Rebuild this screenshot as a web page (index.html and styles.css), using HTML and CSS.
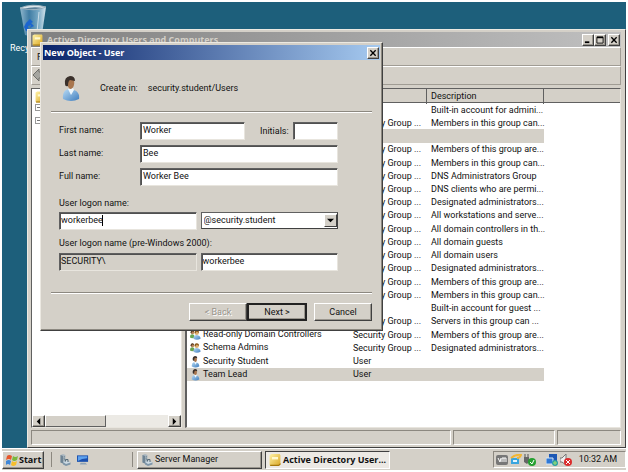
FILE: index.html
```html
<!DOCTYPE html>
<html lang="en">
<head>
  <meta charset="UTF-8" />
  <meta name="viewport" content="width=device-width, initial-scale=1.0"/>
  <title>Active Directory Users and Computers</title>
  <link rel="stylesheet" href="styles.css">
</head>
<body>
  <!-- shared icons -->
  <svg class="defs" width="0" height="0">
    <defs>
      <linearGradient id="shirt" x1="0" y1="0" x2="1" y2="1">
        <stop offset="0" stop-color="#b9dcf6"/><stop offset="1" stop-color="#3f7dbd"/>
      </linearGradient>
      <linearGradient id="gold" x1="0" y1="0" x2="1" y2="1">
        <stop offset="0" stop-color="#fff3a8"/><stop offset="1" stop-color="#d9a520"/>
      </linearGradient>
      <linearGradient id="glass" x1="0" y1="0" x2="1" y2="0">
        <stop offset="0" stop-color="#8fb6cc"/><stop offset=".35" stop-color="#3f7ca3"/><stop offset=".7" stop-color="#77a9c5"/><stop offset="1" stop-color="#d5e4ec"/>
      </linearGradient>
      <symbol id="user" viewBox="0 0 20 26">
        <path d="M2 23Q1 15 7 13L13 14Q19 16 18 23Q10 27 2 23Z" fill="url(#shirt)"/>
        <path d="M7 13L10 19L13 14L12 12Z" fill="#eef7fd"/>
        <path d="M6 5Q7 1 11 2Q14 4 13 9Q12 13 9 13Q6 11 6 5Z" fill="#a9764e"/>
        <path d="M4 8Q3 1 9 0Q14 0 14 5L9 4Q7 5 7 10Q4 11 4 8Z" fill="#3a302b"/>
      </symbol>
      <symbol id="group" viewBox="0 0 26 24">
        <path d="M0 18Q0 10 5 10Q11 10 11 18Q5 21 0 18Z" fill="#68a552"/>
        <circle cx="6" cy="6" r="4" fill="#b88458"/>
        <path d="M1 6Q2 0 7 1Q10 2 10 5L5 4L3 9Z" fill="#5a3c22"/>
        <path d="M8 21Q8 12 16 12Q25 13 25 21Q16 26 8 21Z" fill="url(#shirt)"/>
        <circle cx="16" cy="7" r="5" fill="#dfae70"/>
        <path d="M11 8Q10 1 16 1Q22 1 21 7L16 4L13 8Z" fill="#8a5a1d"/>
      </symbol>
      <symbol id="book" viewBox="0 0 20 20">
        <path d="M1 2L4 0H18L19 2V18L16 20H2L1 18Z" fill="url(#gold)"/>
        <path d="M5 5H15V9H5Z" fill="#fff9cf"/>
        <path d="M2 18H16L19 15V18L16 20H2Z" fill="#a5780c"/>
      </symbol>
      <symbol id="server" viewBox="0 0 24 24">
        <path d="M3 2L8 0L13 2V17L8 19L3 17Z" fill="#aab7c0"/>
        <path d="M3 2L8 4V19L3 17Z" fill="#6f8494"/>
        <path d="M9 6L12 5M9 9L12 8M9 12L12 11" stroke="#47606f" stroke-width="1"/>
        <path d="M8 16L16 13L23 17V21L14 24L8 21Z" fill="#7f96a8"/>
        <path d="M8 16L16 13L23 17L14 20Z" fill="#cddae3"/>
        <path d="M13 15V11H18V16" fill="none" stroke="#566b78" stroke-width="2"/>
      </symbol>
    </defs>
  </svg>

  <div class="screen">
    <main class="desktop">
      <div class="desktop-icon">
        <svg viewBox="0 0 28 34">
          <path d="M1 4L27 3L23 30Q15 34 6 31Z" fill="url(#glass)"/>
          <path d="M1 4Q13 -1 27 3Q16 8 1 4Z" fill="#dce6ea" stroke="#9fb5c0"/>
          <path d="M4 5Q14 2 24 4Q14 6 4 5Z" fill="#5b8199"/>
          <path d="M7 19L11 15L14 18L12 19L15 22L11 24L12 21L9 22L10 27H7L5 23Z" fill="#1b65cf"/>
          <path d="M20 8L18 28" stroke="#c9dde8"/>
        </svg>
        <span>Recycle Bin</span>
      </div>

      <section class="window">
        <header class="title inactive">
          <svg class="icon"><use href="#book"/></svg>
          <h1>Active Directory Users and Computers</h1>
          <button class="cap" aria-label="Minimize"><svg viewBox="0 0 9 9"><path d="M1 7H6" stroke="#000" stroke-width="2"/></svg></button>
          <button class="cap" aria-label="Maximize"><svg viewBox="0 0 9 9"><path d="M1 1.500H8V8H1Z" fill="none" stroke="#000"/><path d="M1 1.500H8" stroke="#000" stroke-width="2"/></svg></button>
          <button class="cap last" aria-label="Close"><svg viewBox="0 0 9 9"><path d="M1.500 1.500L7.500 7.500M7.500 1.500L1.500 7.500" stroke="#000" stroke-width="1.500"/></svg></button>
        </header>
        <nav class="bar">File</nav>
        <div class="bar tools">
          <button class="back" aria-label="Back"><svg viewBox="0 0 14 14"><path d="M1 7L7 1V4H13V10H7V13Z" fill="#a5a5a0" stroke="#6e6e6a"/></svg></button>
        </div>
        <div class="panes">
          <div class="tree">
            <ul>
              <li><svg class="icon"><use href="#book"/></svg></li>
              <li><span class="plus"></span></li>
              <li><span class="plus"></span></li>
            </ul>
            <div class="scroll">
              <button aria-label="Scroll left"><svg viewBox="0 0 8 8"><path d="M6 0V8L2 4Z"/></svg></button>
              <span class="thumb"></span>
              <button aria-label="Scroll right"><svg viewBox="0 0 8 8"><path d="M2 0V8L6 4Z"/></svg></button>
            </div>
          </div>
          <div class="list">
            <div class="head"><span></span><span></span><span>Description</span><span></span></div>
            <table>
              <colgroup><col class="c-name"><col class="c-type"><col class="c-desc"></colgroup>
              <tbody>
                <tr><td></td><td></td><td>Built-in account for admini...</td></tr>
                <tr><td></td><td>Security Group ...</td><td>Members in this group can...</td></tr>
                <tr class="sel"><td></td><td></td><td></td></tr>
                <tr><td></td><td>Security Group ...</td><td>Members of this group are...</td></tr>
                <tr><td></td><td>Security Group ...</td><td>Members in this group can...</td></tr>
                <tr><td></td><td>Security Group ...</td><td>DNS Administrators Group</td></tr>
                <tr><td></td><td>Security Group ...</td><td>DNS clients who are permi...</td></tr>
                <tr><td></td><td>Security Group ...</td><td>Designated administrators...</td></tr>
                <tr><td></td><td>Security Group ...</td><td>All workstations and serve...</td></tr>
                <tr><td></td><td>Security Group ...</td><td>All domain controllers in th...</td></tr>
                <tr><td></td><td>Security Group ...</td><td>All domain guests</td></tr>
                <tr><td></td><td>Security Group ...</td><td>All domain users</td></tr>
                <tr><td></td><td>Security Group ...</td><td>Designated administrators...</td></tr>
                <tr><td></td><td>Security Group ...</td><td>Members of this group are...</td></tr>
                <tr><td></td><td>Security Group ...</td><td>Members in this group can...</td></tr>
                <tr><td></td><td></td><td>Built-in account for guest ...</td></tr>
                <tr><td></td><td>Security Group ...</td><td>Servers in this group can ...</td></tr>
                <tr><td><svg class="icon"><use href="#group"/></svg>Read-only Domain Controllers</td><td>Security Group ...</td><td>Members of this group are...</td></tr>
                <tr><td><svg class="icon"><use href="#group"/></svg>Schema Admins</td><td>Security Group ...</td><td>Designated administrators...</td></tr>
                <tr><td><svg class="icon"><use href="#user"/></svg>Security Student</td><td>User</td><td></td></tr>
                <tr class="sel"><td><svg class="icon"><use href="#user"/></svg>Team Lead</td><td>User</td><td></td></tr>
              </tbody>
            </table>
          </div>
        </div>
        <footer class="status"><span></span><span></span><span></span></footer>
      </section>

      <form class="dialog">
        <header class="title">
          <h2>New Object - User</h2>
          <button type="button" class="cap last" aria-label="Close"><svg viewBox="0 0 9 9"><path d="M1.500 1.500L7.500 7.500M7.500 1.500L1.500 7.500" stroke="#000" stroke-width="1.500"/></svg></button>
        </header>
        <div class="intro">
          <svg class="avatar"><use href="#user"/></svg>
          <span>Create in:</span>
          <span>security.student/Users</span>
        </div>
        <div class="fields">
          <div class="row">
            <label for="first">First name:</label>
            <input id="first" type="text" value="Worker">
            <label for="initials" class="ini-label">Initials:</label>
            <input id="initials" class="initials" type="text">
          </div>
          <div class="row">
            <label for="last">Last name:</label>
            <input id="last" type="text" value="Bee">
          </div>
          <div class="row">
            <label for="full">Full name:</label>
            <input id="full" type="text" value="Worker Bee">
          </div>
          <label for="logon" class="above">User logon name:</label>
          <div class="pair">
            <div class="caret-box">
              <input id="logon" type="text" value="workerbee">
              <span class="caret"></span>
            </div>
            <div class="combo">
              <select aria-label="Domain suffix"><option>@security.student</option></select>
              <span class="drop"><svg viewBox="0 0 8 8"><path d="M0 2H8L4 6Z"/></svg></span>
            </div>
          </div>
          <label for="old" class="above">User logon name (pre-Windows 2000):</label>
          <div class="pair">
            <input type="text" class="fixed" value="SECURITY\" aria-label="Domain" readonly>
            <input id="old" type="text" value="workerbee">
          </div>
        </div>
        <div class="actions">
          <button type="button" disabled>&lt; Back</button>
          <button type="button" class="default">Next &gt;</button>
          <button type="button" class="cancel">Cancel</button>
        </div>
      </form>
    </main>

    <footer class="taskbar">
      <button class="start">
        <svg viewBox="0 0 12 12">
          <path d="M1 2Q3 0 6 2L5 6Q3 4 0 6Z" fill="#e8562a"/>
          <path d="M7 2Q9 4 12 2L11 6Q8 8 6 6Z" fill="#7ab83e"/>
          <path d="M0 7Q3 5 5 7L4 11Q2 9 0 11Z" fill="#3f87d8"/>
          <path d="M6 7Q8 9 11 7L10 11Q7 13 5 11Z" fill="#f6bf2d"/>
        </svg>Start
      </button>
      <div class="quick">
        <svg><use href="#server"/></svg>
        <svg viewBox="0 0 13 12"><path d="M0 1H12V8H0Z" fill="#1a4fae"/><path d="M1 2H11V4Q5 4 1 7Z" fill="#5fa2ee"/><path d="M4 9H9L11 11H3Z" fill="#8fa3b5"/></svg>
      </div>
      <button class="task"><svg><use href="#server"/></svg>Server Manager</button>
      <button class="task active"><svg><use href="#book"/></svg>Active Directory User...</button>
      <div class="tray">
        <svg viewBox="0 0 12 12"><rect y="1" width="12" height="10" rx="2" fill="#777"/><path d="M2 4L4 8L5 4M6 8V4H8V8M8 4H10V8" fill="none" stroke="#fff"/></svg>
        <svg viewBox="0 0 12 12"><path d="M1 4H9V10H1Z" fill="#3aa6df"/><path d="M3 6H7V8H3Z" fill="#e4f5ff"/><path d="M1 4Q6 0 11 1Q10 4 7 4" fill="none" stroke="#f2b632" stroke-width="2"/></svg>
        <svg viewBox="0 0 12 12"><path d="M1 0V3M4 0V3" stroke="#555"/><path d="M0 3H5V8L3 10L0 8Z" fill="#666"/><circle cx="8" cy="8" r="4" fill="#25a030"/><path d="M6 8L8 10L10 6" fill="none" stroke="#fff"/></svg>
        <svg class="gap" viewBox="0 0 12 12"><path d="M3 0H11V7H3Z" fill="#1c57b4"/><path d="M0 4H7V10H0Z" fill="#2f78d6" stroke="#d5e5f5"/><circle cx="9" cy="9" r="3" fill="#2aa0a0"/><path d="M7 9H11M9 7V11" stroke="#9fe070"/></svg>
        <svg viewBox="0 0 12 12"><path d="M0 4H2L6 0V11L2 8H0Z" fill="#eee" stroke="#777"/><circle cx="8" cy="8" r="4" fill="#db2c2c"/><path d="M6 6L10 10M10 6L6 10" stroke="#fff"/></svg>
        <time>10:32 AM</time>
      </div>
    </footer>
  </div>
</body>
</html>
```
FILE: styles.css
```css
* {
  box-sizing: border-box;
}
body {
  margin: 0;
  background: #fff;
  color: #111;
  font: 9px/11px Roboto, "Open Sans", sans-serif;
}
.defs {
  position: absolute;
}
.screen {
  display: flex;
  flex-direction: column;
  height: 100vh;
  padding: 2px;
}
.desktop {
  position: relative;
  flex: 1;
  background: #1d5f7b;
}
button,
input,
select {
  font: inherit;
  color: inherit;
  margin: 0;
  padding: 0;
  border-radius: 0;
}
button {
  background: #d4d0c8;
  border: 1px solid;
  border-color: #fff #404040 #404040 #fff;
  box-shadow: inset -1px -1px #9a968e;
  white-space: nowrap;
}
.icon {
  width: 11px;
  height: 12px;
  flex: none;
}
.desktop-icon {
  position: absolute;
  left: 5px;
  top: 2px;
  width: 52px;
  color: #fff;
  text-align: center;
}
.desktop-icon svg {
  display: block;
  width: 28px;
  height: 34px;
  margin: 0 auto 5px;
}

/* main window */
.window {
  position: absolute;
  left: 25px;
  top: 27px;
  right: 0;
  bottom: 0;
  display: flex;
  flex-direction: column;
  padding: 2px 4px 2px 3px;
  background: #d4d0c8;
  border: 1px solid;
  border-color: #ece9e2 #404040 #404040 #ece9e2;
}
.title {
  display: flex;
  align-items: center;
  height: 15px;
  padding: 0 1px;
  background: linear-gradient(90deg, #0a246a, #a6caf0);
  color: #fff;
}
.title.inactive {
  background: linear-gradient(90deg, #808080, #c0c0c0);
  color: #d4d0c8;
}
.title h1,
.title h2 {
  flex: 1;
  margin: 0;
  font: bold 9px/13px "Open Sans", "Noto Sans", sans-serif;
}
.title h1 {
  padding-left: 4px;
}
.cap {
  display: flex;
  align-items: center;
  justify-content: center;
  width: 12px;
  height: 12px;
}
.cap svg {
  width: 8px;
  height: 8px;
}
.cap.last {
  margin-left: 2px;
}
.bar {
  height: 19px;
  padding: 4px 5px;
  border: 1px solid;
  border-color: #fff #a09c94 #a09c94 #fff;
}
.bar.tools {
  padding: 1px 0;
}
.back {
  display: block;
  background: none;
  border: 0;
  box-shadow: none;
}
.back svg {
  display: block;
  width: 14px;
  height: 14px;
}
.panes {
  flex: 1;
  display: grid;
  grid-template-columns: 151px 1fr;
  gap: 3px;
  margin-top: 3px;
  min-height: 0;
}
.tree,
.list {
  display: flex;
  flex-direction: column;
  min-width: 0;
  background: #fff;
  border: 1px solid;
  border-color: #606060 #e8e5de #e8e5de #606060;
}
.tree ul {
  flex: 1;
  margin: 0;
  padding: 2px 3px;
  list-style: none;
}
.tree li {
  height: 13px;
}
.plus {
  display: block;
  width: 7px;
  height: 7px;
  border: 1px solid #999;
  background: linear-gradient(#777, #777) center / 3px 1px no-repeat;
}
.scroll {
  display: flex;
  height: 12px;
  background: #eceae5;
}
.scroll button {
  width: 13px;
}
.scroll button:last-child {
  margin-left: auto;
}
.scroll svg {
  display: block;
  width: 7px;
  height: 7px;
  margin: auto;
}
.thumb {
  width: 61px;
  background: #d4d0c8;
  border: 1px solid;
  border-color: #fff #606060 #606060 #fff;
}
.list {
  border-left-width: 2px;
}
.head {
  display: grid;
  grid-template-columns: 163px 77px 117px 1fr;
  height: 14px;
  background: #d4d0c8;
  border-bottom: 1px solid #606060;
}
.head span {
  padding-left: 4px;
  border-right: 1px solid #606060;
  line-height: 15px;
}
.head span:last-child {
  border: 0;
}
.list table {
  width: 357px;
  height: 278px;
  table-layout: fixed;
  border-collapse: collapse;
}
.c-name {
  width: 163px;
}
.c-type {
  width: 77px;
}
.list tr {
  height: 13px;
}
.list td {
  padding: 1px 0 0 4px;
  white-space: nowrap;
}
.list td .icon {
  margin-right: 2px;
  vertical-align: top;
}
.list td:first-child,
.list td:nth-child(2) {
  padding-left: 3px;
}
.sel {
  background: #d4d0c8;
}
.status {
  display: grid;
  grid-template-columns: 1fr 102px 64px;
  gap: 2px;
  height: 15px;
  margin-top: 2px;
}
.status span {
  border: 1px solid;
  border-color: #8c8880 #fff #fff #8c8880;
}

/* new user dialog */
.dialog {
  position: absolute;
  left: 38px;
  top: 40px;
  width: 343px;
  padding: 2px;
  background: #d4d0c8;
  border: 1px solid;
  border-color: #ece9e2 #404040 #404040 #ece9e2;
  box-shadow: inset -1px -1px #8c8880;
}
.intro {
  display: flex;
  align-items: center;
  gap: 10px;
  height: 52px;
  margin: 0 8px;
  border-bottom: 1px solid #8c8880;
  box-shadow: 0 1px #fff;
}
.avatar {
  width: 20px;
  height: 26px;
  margin: 6px 9px 0 10px;
}
.intro span {
  padding-top: 6px;
}
.fields {
  display: flex;
  flex-direction: column;
  gap: 5px;
  margin: 10px 42px 0 16px;
}
.row {
  display: flex;
  align-items: center;
}
.row label {
  width: 81px;
  padding-bottom: 2px;
}
.row .ini-label {
  width: 48px;
  padding: 0 0 0 15px;
}
input {
  width: 100%;
  min-width: 0;
  height: 18px;
  padding: 0 1px 2px;
  background: #fff;
  border: 1px solid;
  border-color: #606060 #e8e5de #e8e5de #606060;
  box-shadow: inset 1px 1px #505050;
  outline: 0;
}
.row input {
  flex: 1;
  padding-left: 2px;
}
.row .initials {
  flex: none;
  width: 45px;
}
.above {
  margin: 7px 0 -2px;
}
.pair + .above {
  margin: 3px 0 -1px;
}
.pair {
  display: grid;
  grid-template-columns: 1fr 1fr;
  gap: 4px;
}
.caret-box,
.combo {
  position: relative;
}
.caret {
  position: absolute;
  left: 43px;
  top: 3px;
  width: 1px;
  height: 11px;
  background: #000;
}
.combo select {
  appearance: none;
  width: 100%;
  height: 17px;
  padding: 0 2px;
  background: #fff;
  border: 1px solid;
  border-color: #606060 #404040 #404040 #606060;
}
.drop {
  position: absolute;
  right: 1px;
  top: 2px;
  width: 13px;
  height: 13px;
  padding: 2px;
  background: #d4d0c8;
  border: 1px solid;
  border-color: #fff #404040 #404040 #fff;
  pointer-events: none;
}
.drop svg {
  display: block;
  width: 7px;
  height: 7px;
}
input.fixed {
  background: #d4d0c8;
}
.actions {
  display: flex;
  justify-content: flex-end;
  margin: 21px 8px 0;
  padding: 10px 0 7px;
  border-top: 1px solid #8c8880;
  box-shadow: inset 0 1px #fff;
}
.actions button {
  width: 58px;
  height: 18px;
}
.actions button:disabled {
  color: #98948c;
  text-shadow: 1px 1px #fff;
}
.actions .default {
  width: 60px;
  border: 2px solid #222;
}
.actions .cancel {
  margin-left: 7px;
}

/* taskbar */
.taskbar {
  display: flex;
  align-items: center;
  height: 22px;
  background: #d4d0c8;
  border-top: 1px solid #fff;
}
.taskbar svg {
  width: 12px;
  height: 12px;
  flex: none;
}
.taskbar button {
  display: flex;
  align-items: center;
  height: 18px;
}
.taskbar .start {
  gap: 1px;
  width: 42px;
  padding-left: 3px;
  font-family: "Open Sans", "Noto Sans", sans-serif;
  font-weight: bold;
}
.quick {
  display: flex;
  align-items: center;
  gap: 6px;
  width: 82px;
  height: 15px;
  margin: 0 4px 0 7px;
  padding-left: 7px;
  border: solid #8c8880;
  border-width: 0 1px;
}
.taskbar .task {
  gap: 2px;
  width: 125px;
  padding-left: 3px;
}
.taskbar .active {
  margin-left: 3px;
  background: #ece9e4;
  border-color: #404040 #fff #fff #404040;
  box-shadow: none;
  font-family: "Open Sans", "Noto Sans", sans-serif;
  font-weight: bold;
}
.tray {
  display: flex;
  align-items: center;
  gap: 2px;
  height: 17px;
  margin-left: auto;
  padding: 0 8px 0 2px;
  border: 1px solid;
  border-color: #8c8880 #fff #fff #8c8880;
}
.tray .gap {
  margin-left: 8px;
}
.tray time {
  margin-left: 5px;
}
```
